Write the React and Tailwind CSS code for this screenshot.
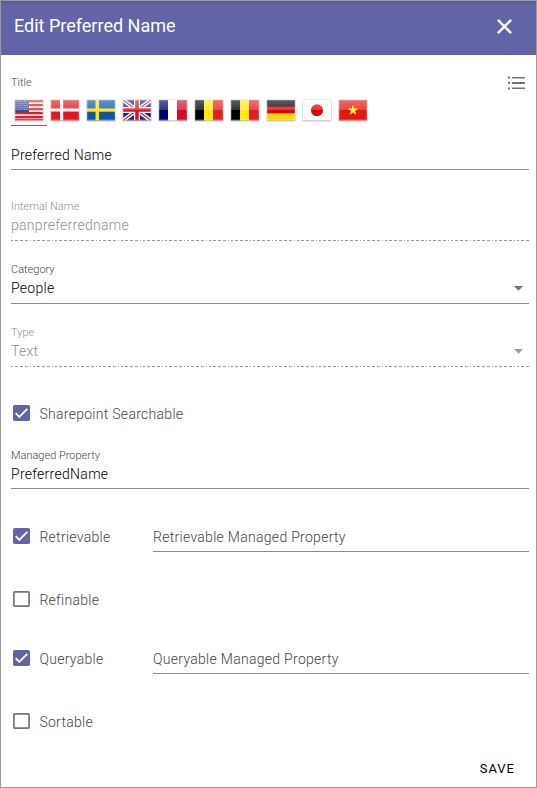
import React from "react";

function Flag({ id, children }) {
  return (
    <svg width="30" height="24" viewBox="0 0 30 24" className="ml-[2.5px] block shrink-0">
      <defs>
        <linearGradient id={`gloss-${id}`} x1="0" y1="0" x2="0" y2="1">
          <stop offset="0" stopColor="#fff" stopOpacity="0.36" />
          <stop offset="1" stopColor="#fff" stopOpacity="0.2" />
        </linearGradient>
        <clipPath id={`clip-${id}`}>
          <rect width="28" height="20.5" rx="0.5" />
        </clipPath>
      </defs>
      <rect x="0.5" y="1.5" width="29" height="21.5" rx="1" fill="#000" opacity="0.1" />
      <rect x="0.5" y="0.5" width="29" height="21.5" rx="1" fill="#000" opacity="0.15" />
      <g transform="translate(1 1)" clipPath={`url(#clip-${id})`}>
        {children}
        <rect width="28" height="10" fill={`url(#gloss-${id})`} />
        <rect x="0.5" y="0.5" width="27" height="19" fill="none" stroke="#fff" strokeOpacity="0.18" />
      </g>
    </svg>
  );
}

function Tricolor({ colors }) {
  return (
    <>
      <rect width="9.5" height="20.5" fill={colors[0]} />
      <rect x="9" width="9.5" height="20.5" fill={colors[1]} />
      <rect x="18" width="10" height="20.5" fill={colors[2]} />
    </>
  );
}

const belgium = <Tricolor colors={["#000", "#ffe90f", "#e31d25"]} />;

const flags = [
  <>
    <rect width="28" height="20.5" fill="#fff" />
    {[0, 4, 8, 12, 16].map((y) => (
      <rect key={y} y={y} width="28" height="2.3" fill="#dc1f2c" />
    ))}
    <rect y="18.8" width="28" height="1.7" fill="#dc1f2c" />
    <rect width="14" height="12" fill="#3c4a91" />
    {[1.5, 3.5, 5.5, 7.5, 9.5].map((y, r) =>
      [1.5, 4, 6.5, 9, 11.5].map((x) => (
        <rect key={`${x}-${y}`} x={x + (r % 2)} y={y - 0.5} width="1" height="1" fill="#fff" opacity="0.5" />
      ))
    )}
  </>,
  <>
    <rect width="28" height="20.5" fill="#e1151b" />
    <path d="M9 0h3.2v20.5H9zM0 8.5h28v3H0z" fill="#fff" />
  </>,
  <>
    <rect width="28" height="20.5" fill="#0b56a8" />
    <path d="M8.5 0h3.5v20.5H8.5zM0 8.5h28v3.3H0z" fill="#ffe30a" />
  </>,
  <>
    <rect width="28" height="20.5" fill="#1a2a7b" />
    <path d="M0 0L28 20.5M28 0L0 20.5" stroke="#fff" strokeWidth="4" />
    <path d="M0 0L28 20.5M28 0L0 20.5" stroke="#d4142c" strokeWidth="1.3" />
    <path d="M14 0V20.5M0 10H28" stroke="#fff" strokeWidth="6" />
    <path d="M14 0V20.5M0 10H28" stroke="#d4142c" strokeWidth="3.6" />
  </>,
  <Tricolor colors={["#00006b", "#fff", "#d30a2b"]} />,
  belgium,
  belgium,
  <>
    <rect width="28" height="7" fill="#000" />
    <rect y="6.7" width="28" height="7" fill="#e00010" />
    <rect y="13.5" width="28" height="7" fill="#ffd60f" />
  </>,
  <>
    <rect width="28" height="20.5" fill="#fff" />
    <circle cx="14" cy="10.3" r="6" fill="#dc000c" />
  </>,
  <>
    <rect width="28" height="20.5" fill="#e2180f" />
    <path d="M14 4.8l1.25 3.8h4l-3.2 2.4 1.2 3.9-3.25-2.4-3.25 2.4 1.2-3.9-3.2-2.4h4z" fill="#fff42a" />
  </>,
];

function Field({ label, value, select, disabled }) {
  return (
    <div
      className={
        disabled
          ? "flex h-[43px] flex-col text-[#8f8f8f]"
          : "flex h-[43px] flex-col border-b border-[#8c8c8c] text-black"
      }
    >
      <div
        className={
          disabled
            ? "h-4 pt-px text-[11px] leading-4"
            : "h-4 pt-px text-[11px] leading-4 text-[#444]"
        }
      >
        {label}
      </div>
      <div className="flex h-[22px] items-center justify-between text-sm tracking-[0.29px]">
        <span>{value}</span>
        {select && (
          <svg width="9" height="5" viewBox="0 0 9 5" className="mr-1.5" fill={disabled ? "#9b9b9b" : "#757575"}>
            <path d="M0 0h9L4.5 4.7z" />
          </svg>
        )}
      </div>
      {disabled && (
        <svg width="518" height="1" className="mt-1 block">
          <path d="M0 .5H518" stroke="#999" strokeDasharray="2 2 3 2 3 2 3 2 1 2" />
        </svg>
      )}
    </div>
  );
}

function Check({ label, checked }) {
  return (
    <div className="flex h-[22px] w-[142px] shrink-0 items-center whitespace-nowrap text-sm tracking-[0.29px] text-[#444]">
      <svg width="17" height="16" viewBox="0 0 17 16" className="mr-[9px] mb-[1.5px] ml-[2.4px] shrink-0">
        {checked ? (
          <>
            <rect width="17" height="16" rx="1.8" fill="#6264a7" />
            <path d="M2.7 8.2l3.6 3.6 8-8" fill="none" stroke="#fff" strokeWidth="1.9" />
          </>
        ) : (
          <rect x="0.9" y="0.9" width="15.2" height="14.2" rx="1" fill="none" stroke="#757575" strokeWidth="1.7" />
        )}
      </svg>
      {label}
    </div>
  );
}

function Property({ label, placeholder, checked }) {
  return (
    <div className="flex h-[26px]">
      <Check label={label} checked={checked} />
      {placeholder && (
        <div className="flex-1 border-b border-[#8c8c8c] text-sm leading-[22px] tracking-[0.29px] text-[#444]">
          {placeholder}
        </div>
      )}
    </div>
  );
}

export default function App() {
  return (
    <div className="flex h-[788px] w-[537px] flex-col border border-[#9b9b9b] bg-white font-[Roboto,sans-serif] font-light">
      <header className="flex h-[54px] shrink-0 items-center justify-between bg-[#6264a7] bg-linear-to-b from-[#55578f] from-0% to-[#6264a7] to-[4px] pr-6 pb-1 pl-[13px] text-white">
        <h1 className="text-lg font-normal">Edit Preferred Name</h1>
        <svg width="15" height="15" viewBox="0 0 14 14" stroke="#fff" strokeWidth="2.2">
          <path d="M.8.8l12.4 12.4M13.2.8L.8 13.2" />
        </svg>
      </header>
      <main className="flex flex-1 flex-col pr-[7px] pl-2.5">
        <div className="mt-5 flex h-4 items-center justify-between text-[11px] text-[#444]">
          Title
          <svg width="18" height="14" viewBox="0 0 18 14" className="mr-1" fill="#757575">
            <path d="M1 .5h2v2H1zM1 6h2v2H1zM1 11.5h2v2H1zM5 1h13v1.5H5zM5 6h13v2H5zM5 11.5h13v1.5H5z" />
          </svg>
        </div>
        <div className="mt-2 flex h-[27px]">
          {flags.map((flag, i) => (
            <div
              key={i}
              className={
                i === 0
                  ? "flex w-9 border-b border-[#6264a7]"
                  : "flex w-9 border-b border-transparent"
              }
            >
              <Flag id={i}>{flag}</Flag>
            </div>
          ))}
        </div>
        <div className="mt-[18px] h-[26px] border-b border-[#8c8c8c] text-sm leading-[22px] tracking-[0.29px] text-black">
          Preferred Name
        </div>
        <div className="mt-7 flex flex-col gap-5">
          <Field label="Internal Name" value="panpreferredname" disabled />
          <Field label="Category" value="People" select />
          <Field label="Type" value="Text" select disabled />
        </div>
        <div className="mt-[36px]">
          <Check label="Sharepoint Searchable" checked />
        </div>
        <div className="mt-[22px] flex h-[42px] flex-col border-b border-[#8c8c8c]">
          <div className="h-4 pt-px text-[11px] leading-4 text-[#444]">Managed Property</div>
          <div className="text-sm leading-[22px] tracking-[0.29px] text-black">PreferredName</div>
        </div>
        <div className="mt-[37px]">
          <Property label="Retrievable" placeholder="Retrievable Managed Property" checked />
        </div>
        <div className="mt-[37px]">
          <Property label="Refinable" />
        </div>
        <div className="mt-[33px]">
          <Property label="Queryable" placeholder="Queryable Managed Property" checked />
        </div>
        <div className="mt-[37px]">
          <Property label="Sortable" />
        </div>
        <button className="mt-[21px] mr-[14px] h-[22px] self-end text-[13px] font-normal tracking-[1px] text-black">
          SAVE
        </button>
      </main>
    </div>
  );
}
